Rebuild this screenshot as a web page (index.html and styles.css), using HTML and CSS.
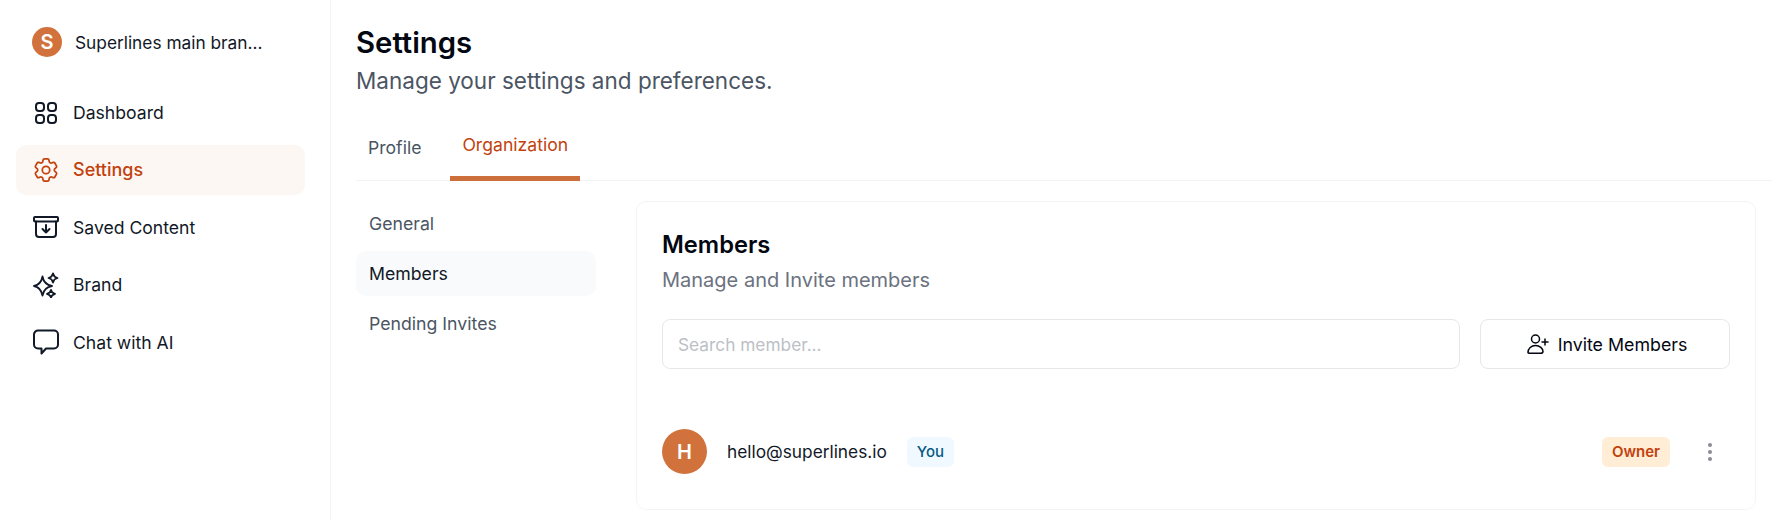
FILE: index.html
```html
<!DOCTYPE html>
<html lang="en">
<head>
<meta charset="utf-8">
<title>Settings</title>
<link rel="stylesheet" href="styles.css">
</head>
<body>
<div class="app">
  <aside class="sidebar">
    <div class="brand-row">
      <span class="brand-avatar">S</span>
      <span class="brand-name">Superlines main bran...</span>
    </div>
    <nav class="nav">
      <a class="nav-item">
        <svg class="nav-icon" viewBox="0 0 26 26" fill="none" stroke="currentColor" stroke-width="2"><rect x="3" y="3" width="8" height="8" rx="3"/><rect x="15" y="3" width="8" height="8" rx="3"/><rect x="3" y="15" width="8" height="8" rx="3"/><rect x="15" y="15" width="8" height="8" rx="3"/></svg>
        Dashboard
      </a>
      <a class="nav-item nav-item-active">
        <svg class="nav-icon" viewBox="1.500 1.500 21 21" fill="none" stroke="currentColor" stroke-width="1.4" stroke-linejoin="round"><path d="M9.594 3.94c.09-.542.56-.94 1.11-.94h2.593c.55 0 1.02.398 1.11.94l.213 1.281c.063.374.313.686.645.87.074.04.147.083.22.127.324.196.72.257 1.075.124l1.217-.456a1.125 1.125 0 011.37.49l1.296 2.247a1.125 1.125 0 01-.26 1.431l-1.003.827c-.293.24-.438.613-.431.992a6.759 6.759 0 010 .255c-.007.378.138.75.43.99l1.005.828c.424.35.534.954.26 1.43l-1.298 2.247a1.125 1.125 0 01-1.369.491l-1.217-.456c-.355-.133-.75-.072-1.076.124a6.57 6.57 0 01-.22.128c-.331.183-.581.495-.644.869l-.213 1.28c-.09.543-.56.941-1.11.941h-2.594c-.55 0-1.02-.398-1.11-.94l-.213-1.281c-.062-.374-.312-.686-.644-.87a6.52 6.52 0 01-.22-.127c-.325-.196-.72-.257-1.076-.124l-1.217.456a1.125 1.125 0 01-1.369-.49l-1.297-2.247a1.125 1.125 0 01.26-1.431l1.004-.827c.292-.24.437-.613.43-.992a6.932 6.932 0 010-.255c.007-.378-.138-.75-.43-.99l-1.004-.828a1.125 1.125 0 01-.26-1.43l1.297-2.247a1.125 1.125 0 011.37-.491l1.216.456c.356.133.751.072 1.076-.124.072-.044.146-.087.22-.128.332-.183.582-.495.644-.869l.214-1.281z"/><circle cx="12" cy="12" r="3"/></svg>
        Settings
      </a>
      <a class="nav-item">
        <svg class="nav-icon" viewBox="0 0 26 26" fill="none" stroke="currentColor" stroke-width="2" stroke-linecap="round" stroke-linejoin="round"><rect x="1" y="3" width="24" height="4.500" rx="1"/><path d="M3 7.500V20a3 3 0 0 0 3 3h14a3 3 0 0 0 3-3V7.500"/><path d="M13 11v7.500M9.500 15 13 18.500l3.500-3.500"/></svg>
        Saved Content
      </a>
      <a class="nav-item">
        <svg class="nav-icon" viewBox="0 0 26 26" fill="none" stroke="currentColor" stroke-width="1.8" stroke-linejoin="round"><path d="M9.500 4.500C10.500 10 13.500 13 19 14 13.500 15 10.500 18 9.500 23.500 8.500 18 5.500 15 1 14 5.500 13 8.500 10 9.500 4.500z"/><path d="M20 1.500C20.500 4 21.800 5.300 24.500 6 21.800 6.700 20.500 8 20 10.500 19.500 8 18.200 6.700 15.500 6 18.200 5.300 19.500 4 20 1.500zM18 18C18.400 20 19.500 21.100 22 21.800 19.500 22.500 18.400 23.500 18 25.500 17.600 23.500 16.500 22.500 14 21.800 16.500 21.100 17.600 20 18 18z"/></svg>
        Brand
      </a>
      <a class="nav-item">
        <svg class="nav-icon" viewBox="0 0 26 26" fill="none" stroke="currentColor" stroke-width="2" stroke-linejoin="round"><path d="M5 1.500h16a4 4 0 0 1 4 4v10a4 4 0 0 1-4 4h-8l-4.500 5v-5H5a4 4 0 0 1-4-4v-10a4 4 0 0 1 4-4z"/></svg>
        Chat with AI
      </a>
    </nav>
  </aside>
  <main class="main">
    <header class="page-head">
      <h1 class="page-title">Settings</h1>
      <p class="page-sub">Manage your settings and preferences.</p>
    </header>
    <div class="tabs">
      <a class="tab">Profile</a>
      <a class="tab tab-active">Organization</a>
    </div>
    <div class="content">
      <nav class="subnav">
        <a class="subnav-item">General</a>
        <a class="subnav-item subnav-item-active">Members</a>
        <a class="subnav-item">Pending Invites</a>
      </nav>
      <section class="card">
        <h2 class="card-title">Members</h2>
        <p class="card-sub">Manage and Invite members</p>
        <div class="toolbar">
          <input class="search" type="text" placeholder="Search member...">
          <button class="invite" type="button">
            <svg class="invite-icon" viewBox="0 0 24 24" fill="none" stroke="currentColor" stroke-width="1.500" stroke-linecap="round" stroke-linejoin="round"><circle cx="9.500" cy="7" r="4"/><path d="M2 20.500c0-4 3.300-7 7.500-7s7.500 3 7.500 6c0 1.200-1 1.800-2.500 1.800h-10C3 21.300 2 21 2 20.500zM19 7v6M16 10h6"/></svg>
            Invite Members
          </button>
        </div>
        <div class="member">
          <span class="member-avatar">H</span>
          <span class="member-email">hello@superlines.io</span>
          <span class="badge badge-you">You</span>
          <span class="badge badge-owner">Owner</span>
          <span class="more"><i class="dot"></i><i class="dot"></i><i class="dot"></i></span>
        </div>
      </section>
    </div>
  </main>
</div>
</body>
</html>
```
FILE: styles.css
```css
* { box-sizing: border-box; }
html, body { margin: 0; padding: 0; height: 100%; background: #fff; overflow: hidden; }
body { font-family: Inter, "Liberation Sans", sans-serif; color: #111827; }
.app { display: flex; height: 521px; }

.sidebar { width: 331px; flex: none; border-right: 1px solid #f3f4f6; padding: 27px 25px 0 16px; }
.brand-row { display: flex; align-items: center; gap: 13px; padding-left: 16px; height: 30px; }
.brand-avatar { width: 30px; height: 30px; border-radius: 50%; background: #d1723c; color: #fff; font-weight: 600; font-size: 20px; display: flex; align-items: center; justify-content: center; }
.brand-name { font-size: 17.3px; color: #111827; white-space: nowrap; }
.nav { display: flex; flex-direction: column; gap: 7.4px; margin-top: 31px; }
.nav-item { height: 50px; display: flex; align-items: center; gap: 14px; padding: 0 0 1px 17px; border-radius: 10px; font-size: 17.6px; color: #111827; }
.nav-item-active { background: #fdf7f4; color: #c2410c; font-weight: 500; font-size: 18px; }
.nav-icon { width: 26px; height: 26px; flex: none; }

.main { flex: 1; min-width: 0; padding-left: 25px; }
.page-head { height: 116px; padding-top: 25px; }
.page-title { margin: 0; font-size: 29.3px; line-height: 35px; font-weight: 600; color: #030712; }
.page-sub { margin: 6px 0 0; font-size: 22.5px; line-height: 30px; color: #4b5563; }
.tabs { display: flex; gap: 17px; height: 65px; border-bottom: 1px solid #f3f4f6; }
.tab { display: flex; align-items: center; padding: 0 12px 2px; font-size: 17.6px; color: #4b5563; }
.tab-active { color: #c2410c; border-bottom: 5px solid #cd6f3a; margin-bottom: -1px; padding-bottom: 4px; }
.content { display: flex; align-items: flex-start; gap: 40px; padding-top: 20px; }

.subnav { width: 240px; flex: none; display: flex; flex-direction: column; gap: 5px; }
.subnav-item { height: 45px; display: flex; align-items: center; padding: 0 13px; border-radius: 10px; font-size: 17.7px; color: #4b5563; }
.subnav-item-active { background: #f9fafb; color: #111827; }

.card { flex: 1; min-width: 0; margin-right: 16px; height: 309px; border: 1px solid #f3f4f6; border-radius: 10px; padding: 27px 25px 0; }
.card-title { margin: 0; font-size: 23.7px; line-height: 32px; font-weight: 600; color: #030712; }
.card-sub { margin: 5px 0 0; font-size: 20px; line-height: 28px; color: #6b7280; }
.toolbar { display: flex; gap: 20px; margin-top: 25px; }
.search { flex: 1; min-width: 0; height: 50px; border: 1px solid #e5e7eb; border-radius: 8px; padding: 0 15px; font: 400 17.3px Inter, "Liberation Sans", sans-serif; outline: none; }
.search::placeholder { color: #bcbfc6; opacity: 1; }
.invite { width: 250px; flex: none; height: 50px; display: flex; align-items: center; justify-content: center; gap: 8px; padding: 0 0 0 3px; background: #fff; border: 1px solid #e5e7eb; border-radius: 8px; font: 400 17.8px Inter, "Liberation Sans", sans-serif; color: #030712; }
.invite-icon { width: 24px; height: 24px; }

.member { display: flex; align-items: center; margin-top: 60px; }
.member-avatar { width: 45px; height: 45px; border-radius: 50%; background: #d1723c; color: #fff; font-weight: 600; font-size: 20px; display: flex; align-items: center; justify-content: center; flex: none; }
.member-email { margin-left: 20px; font-size: 17.3px; color: #111827; }
.badge { height: 30px; display: flex; align-items: center; padding: 0 10px; border-radius: 6px; font-size: 15px; font-weight: 500; }
.badge-you { margin-left: 20px; background: #f0f9ff; color: #075985; }
.badge-owner { margin-left: auto; background: #ffedd5; color: #c2410c; font-weight: 600; }
.more { display: flex; flex-direction: column; gap: 3px; align-items: center; width: 14px; margin-left: 33px; margin-right: 13px; }
.dot { width: 4px; height: 4px; border-radius: 50%; background: #8a8d94; }
```
